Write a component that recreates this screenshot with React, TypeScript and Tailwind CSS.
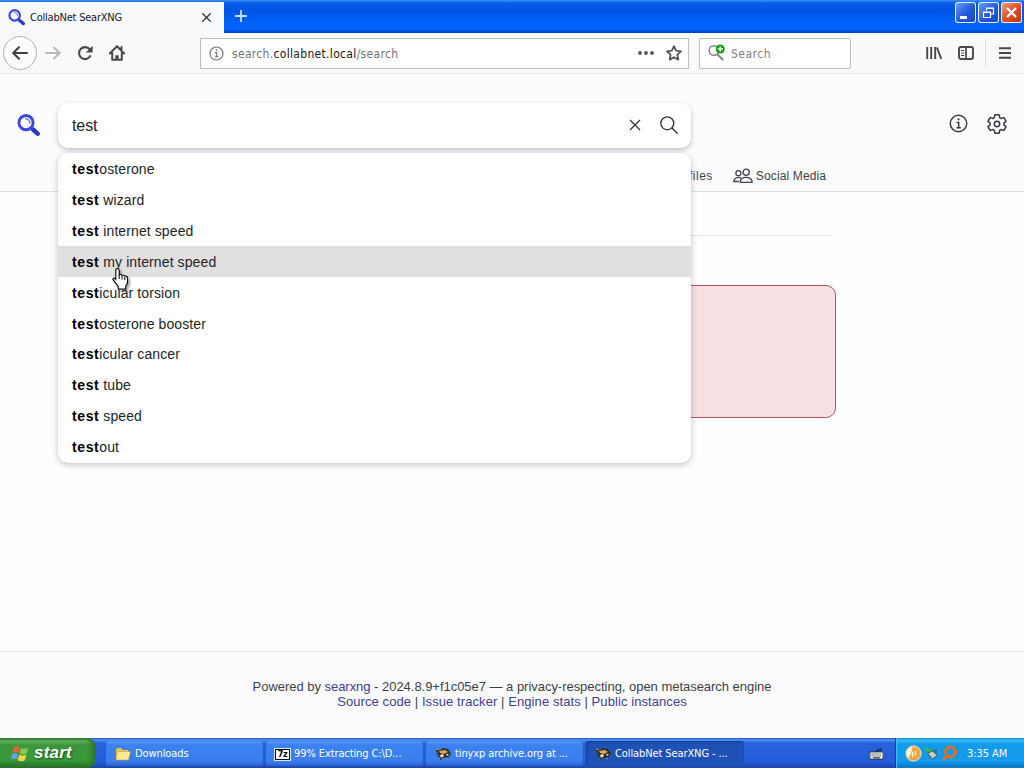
import type { ReactNode } from "react"
import { Plus, X } from "lucide-react"

const suggestions = [
  ["test", "osterone"],
  ["test", " wizard"],
  ["test", " internet speed"],
  ["test", " my internet speed"],
  ["test", "icular torsion"],
  ["test", "osterone booster"],
  ["test", "icular cancer"],
  ["test", " tube"],
  ["test", " speed"],
  ["test", "out"],
]

function SearxLogo({ className }: { className?: string }) {
  return (
    <svg viewBox="0 0 24 24" className={className} fill="none">
      <circle cx="9.4" cy="9" r="7.4" stroke="#3c46e0" strokeWidth="3" />
      <path d="M9 5a4.4 4.4 0 0 1 4.4 4.6" stroke="#7480e8" strokeWidth="1.5" strokeLinecap="round" />
      <path d="M14.5 14.5l2.5 2.5" stroke="#3c46e0" strokeWidth="2.8" />
      <path d="M17 16.5l4.5 4" stroke="#3038c8" strokeWidth="4.8" strokeLinecap="round" />
    </svg>
  )
}

function InfoIcon({ className }: { className?: string }) {
  return (
    <svg viewBox="0 0 18 18" className={className} fill="none" stroke="currentColor">
      <circle cx="9" cy="9" r="7.8" strokeWidth="1.4" />
      <path d="M7.2 8h2v5M7 13h4.2" strokeWidth="1.4" />
      <path d="M8.2 4.2h1.8v1.8H8.2z" fill="currentColor" stroke="none" />
    </svg>
  )
}

function GearIcon() {
  return (
    <svg viewBox="0 0 512 512" className="size-[22px]" fill="none" stroke="#3a3a40" strokeWidth="36" strokeLinejoin="round" strokeLinecap="round">
      <circle cx="256" cy="256" r="62" />
      <path d="M416.39 256a154.34 154.34 0 01-1.53 20.79l45.21 35.46a10.81 10.81 0 012.45 13.75l-42.77 74a10.81 10.81 0 01-13.14 4.59l-44.9-18.08a16.11 16.11 0 00-15.17 1.75A164.48 164.48 0 01325 400.8a15.94 15.94 0 00-8.82 12.14l-6.73 47.89a11.08 11.08 0 01-10.68 9.17h-85.54a11.11 11.11 0 01-10.69-8.87l-6.72-47.82a16.07 16.07 0 00-9-12.22 155.3 155.3 0 01-21.46-12.57 16 16 0 00-15.11-1.71l-44.89 18.07a10.81 10.81 0 01-13.14-4.58l-42.77-74a10.8 10.8 0 012.45-13.75l38.21-30a16.05 16.05 0 006-14.08c-.36-4.17-.58-8.33-.58-12.5s.21-8.27.58-12.35a16 16 0 00-6.07-13.94l-38.19-30A10.81 10.81 0 0149.48 186l42.77-74a10.81 10.81 0 0113.14-4.59l44.9 18.08a16.11 16.11 0 0015.17-1.75A164.48 164.48 0 01187 111.2a15.94 15.94 0 008.82-12.14l6.73-47.89A11.08 11.08 0 01213.23 42h85.54a11.11 11.11 0 0110.69 8.87l6.72 47.82a16.07 16.07 0 009 12.22 155.3 155.3 0 0121.46 12.57 16 16 0 0015.11 1.71l44.89-18.07a10.81 10.81 0 0113.14 4.58l42.77 74a10.8 10.8 0 01-2.45 13.75l-38.21 30a16.05 16.05 0 00-6.05 14.08c.33 4.14.55 8.3.55 12.47z" />
    </svg>
  )
}

function PeopleIcon() {
  return (
    <svg viewBox="0 0 20 16" className="h-4 w-5" fill="none" stroke="#3f3f46" strokeWidth="1.3" strokeLinejoin="round">
      <circle cx="13.2" cy="4.2" r="3.1" />
      <path d="M7.2 14.3c.2-3.5 2.7-4.9 6-4.9s5.8 1.4 6 4.9z" />
      <circle cx="5.4" cy="5.2" r="2.5" />
      <path d="M8.2 9.9c-3.9-1.2-7.1.2-7.4 3.6h5" />
    </svg>
  )
}

function TitleBar() {
  return (
    <div className="flex h-[33px] bg-[linear-gradient(to_bottom,#3a94ff_0px,#0a5ce8_3px,#0054e3_10px,#0062fb_23px,#0066ff_29px,#003fbd_33px)]">
      <div className="mt-0.5 flex h-[31px] w-[224px] items-center bg-[#f8f9fb] pr-[10px] pl-2">
        <SearxLogo className="size-[17px]" />
        <span className="ml-[5px] flex-1 pt-px text-[11px] tracking-[-0.22px] whitespace-nowrap text-[#18181b]">CollabNet SearXNG</span>
        <X className="mb-px size-[15px] text-[#3c3c3f]" strokeWidth={2.3} />
      </div>
      <Plus className="mt-[7px] ml-2 size-[18px] text-[#c5e2ff]" strokeWidth={2.4} />
      <div className="mt-0.5 mr-0.5 ml-auto flex gap-0.5">
        <WindowButton className="bg-[linear-gradient(135deg,#6a9af5,#2458dd_55%,#1948c0)]">
          <path d="M4 13h7v3H4z" fill="#fff" />
        </WindowButton>
        <WindowButton className="bg-[linear-gradient(135deg,#6a9af5,#2458dd_55%,#1948c0)]">
          <path d="M7.5 7.5V5h7v6h-2.5M7.5 5.5h7M4.5 9h7v5.5h-7zM4.5 9.5h7" stroke="#fff" strokeWidth="1.2" fill="none" />
        </WindowButton>
        <WindowButton className="bg-[linear-gradient(135deg,#f09a78,#e0502a_50%,#be340d)]">
          <path d="M5 5l9 9m0-9l-9 9" stroke="#fff" strokeWidth="2.3" />
        </WindowButton>
      </div>
    </div>
  )
}

function WindowButton({ className, children }: { className: string; children: ReactNode }) {
  return (
    <div className={`size-[21px] rounded-[3px] border border-white/90 ${className}`}>
      <svg viewBox="0 0 19 19" className="size-[19px]">
        {children}
      </svg>
    </div>
  )
}

function Toolbar() {
  return (
    <div className="flex h-[41px] items-center border-b border-[#e8e8ea] bg-[#f9f9fa] pl-[3px] text-[12px] text-[#737373]">
      <div className="flex size-[34px] items-center justify-center rounded-full border border-[#b3b3b6] bg-[#fcfcfd]">
        <svg viewBox="0 0 16 16" className="size-4" fill="none" stroke="#3e3e42" strokeWidth="2" strokeLinecap="round" strokeLinejoin="round">
          <path d="M15 8H1.5M7 2.2L1.2 8 7 13.8" />
        </svg>
      </div>
      <svg viewBox="0 0 16 16" className="ml-2 size-4" fill="none" stroke="#b9b9bc" strokeWidth="1.8" strokeLinecap="round" strokeLinejoin="round">
        <path d="M1 8h13.5M9 2.5L14.8 8 9 13.5" />
      </svg>
      <svg viewBox="0 0 16 16" className="ml-4 size-4" fill="none" stroke="#48484c" strokeWidth="2.1">
        <path d="M13.6 10.4A6 6 0 1 1 12.8 4.4" />
        <path d="M15.6.8v6.8H8.8z" fill="#48484c" stroke="none" />
      </svg>
      <svg viewBox="0 0 16 16" className="ml-4 size-4" fill="none" stroke="#48484c" strokeWidth="2" strokeLinejoin="round">
        <path d="M.8 8.5L8 1.3l7.2 7.2M3.2 8v6.8h9.6V8M12.5 2v3" strokeLinecap="round" />
        <path d="M6.3 15v-4.7h3.4V15z" fill="#48484c" stroke="none" />
      </svg>

      <div className="ml-[75px] flex h-[31px] w-[489px] items-center border border-[#bcbcc0] bg-white pr-[6px] pl-2">
        <InfoIcon className="size-[15px] text-[#737376]" />
        <span className="ml-2 flex-1 pt-px tracking-[0.32px]">
          search.<span className="text-[#18181b]">collabnet.local</span>/search
        </span>
        <svg viewBox="0 0 16 4" className="mr-3 h-1 w-4" fill="#55555a">
          <circle cx="2" cy="2" r="1.9" />
          <circle cx="8" cy="2" r="1.9" />
          <circle cx="14" cy="2" r="1.9" />
        </svg>
        <svg viewBox="0 0 16 16" className="size-4" fill="none" stroke="#55555a" strokeWidth="1.8" strokeLinejoin="round">
          <path d="M8 1.2l2.1 4.5 4.9.6-3.6 3.4.9 4.9L8 12.2l-4.3 2.4.9-4.9L1 6.3l4.9-.6z" />
        </svg>
      </div>

      <div className="ml-2.5 flex h-[31px] w-[152px] items-center rounded-xs border border-[#bcbcc0] bg-white pl-2">
        <svg viewBox="0 0 18 18" className="size-[18px]" fill="none">
          <path d="M9.5 10.5l5.2 5" stroke="#858588" strokeWidth="2" strokeLinecap="round" />
          <circle cx="6" cy="6.5" r="4.8" stroke="#858588" strokeWidth="1.5" />
          <circle cx="12.3" cy="5" r="4.5" fill="#12a012" />
          <path d="M12.3 2.4v5.2M9.7 5h5.2" stroke="#fff" strokeWidth="1.5" />
        </svg>
        <span className="ml-[5px] pt-px tracking-[0.5px] text-[#818185]">Search</span>
      </div>

      <svg viewBox="0 0 16 16" className="ml-[75px] size-4" fill="none" stroke="#48484c" strokeWidth="1.9">
        <path d="M1.2 2v12M5.2 2v12M9.2 2v12M11 2.5l4.3 11.5" />
      </svg>
      <svg viewBox="0 0 16 16" className="ml-4 size-4" fill="none" stroke="#48484c">
        <rect x="1" y="2" width="14" height="12" rx="2" strokeWidth="1.9" />
        <path d="M8 2v12" strokeWidth="1.7" />
        <path d="M3 5.5h3.2M3 8h3.2M3 10.5h3.2" strokeWidth="1.1" />
      </svg>
      <div className="ml-[11px] h-7 w-px bg-[#dededf]" />
      <svg viewBox="0 0 14 12" className="ml-3 h-3 w-3.5" stroke="#48484c" strokeWidth="2">
        <path d="M1 1.2h12M1 6h12M1 10.8h12" />
      </svg>
    </div>
  )
}

// Autocomplete list, floats above the page
function Suggestions() {
  return (
    <ul className="absolute top-[50px] left-0 z-10 flex h-[310px] w-full flex-col overflow-hidden rounded-[10px] bg-white text-[14px] text-[#222428] shadow-[0_2px_6px_rgba(34,38,46,0.28)]">
      {suggestions.map(([match, rest], i) => (
        <li
          key={rest}
          className={`flex h-[30.9px] shrink-0 items-center pt-[2.4px] pl-3.5 tracking-[0.1px] whitespace-pre ${i === 3 ? "bg-[#e0e0e0]" : ""}`}
        >
          <b className="tracking-[0.6px] text-black">{match}</b>
          {rest}
        </li>
      ))}
    </ul>
  )
}

function Cursor() {
  return (
    <svg viewBox="0 0 17 23" className="absolute top-[267px] left-[112px] z-20 h-[23px] w-[17px] drop-shadow-[2px_2px_1px_rgba(0,0,0,0.35)]">
      <path
        d="M5.5 1.5c1 0 1.7.7 1.7 1.7v5c0-1 2.8-1 2.8.6 0-1 2.8-.7 2.8.8 0-1 2.7-.6 2.7 1.1v5.1l-1.8 3.5V22H6.2v-2.5L1 12.7c-.6-1.6 1-2.3 2.8-.3V3.2c0-1 .7-1.7 1.7-1.7z"
        fill="#fff"
        stroke="#000"
        strokeWidth="1.1"
      />
      <path d="M7.2 8v4M10 9v3.5M12.8 10v3" stroke="#000" strokeWidth="1" />
    </svg>
  )
}

function SearchPage() {
  return (
    <div className="flex flex-1 flex-col bg-[#fefefe] font-['Liberation_Sans',Arial,sans-serif] text-[#3e3f48]">
      <header className="h-[118px] border-b border-[#dddee4] bg-[#fcfcff] pt-[29px] pl-[17px]">
        <div className="flex h-[45px] items-center">
          <SearxLogo className="size-[23px]" />
          <div className="relative ml-[18px] flex h-[45px] w-[633px] items-center rounded-[10px] bg-white pr-[13px] pl-3.5 shadow-[0_2px_5px_rgba(34,38,46,0.28)]">
            <span className="flex-1 text-[16px] tracking-[-0.1px] text-[#222428]">test</span>
            <svg viewBox="0 0 12 12" className="mr-[19px] mb-0.5 size-3" stroke="#303136" strokeWidth="1.3">
              <path d="M1 1l10 10M11 1L1 11" />
            </svg>
            <svg viewBox="0 0 18 18" className="mb-0.5 size-[18px]" fill="none" stroke="#303136" strokeWidth="1.3" strokeLinecap="round">
              <circle cx="7.3" cy="7.3" r="6.5" />
              <path d="M12 12l5.2 5.2" />
            </svg>
            <Suggestions />
          </div>
          <InfoIcon className="mr-[18px] mb-1 ml-auto size-[19px] text-[#3a3a40]" />
          <div className="mr-4 mb-1">
            <GearIcon />
          </div>
        </div>
        <div className="mt-4 flex items-center text-[12px] leading-6 tracking-[0.13px]">
          <span className="ml-[672px] tracking-[0.5px]">files</span>
          <span className="ml-5">
            <PeopleIcon />
          </span>
          <span className="ml-[3px]">Social Media</span>
        </div>
      </header>

      <main className="flex-1 pl-[58px]">
        <div className="h-11 w-[774px] border-b border-[#e4e4e6]" />
        <div className="mt-[49px] h-[133px] w-[778px] rounded-[10px] border border-[#b3535c] bg-[#f7e1e2]" />
      </main>

      <footer className="h-[87px] border-t border-[#e3e3e8] bg-[#fcfcff] pt-[27px] text-center text-[13px] leading-[15px]">
        <p className="tracking-[-0.03px]">
          Powered by <a className="text-[#3c4196]">searxng</a> - 2024.8.9+f1c05e7 — a privacy-respecting, open metasearch engine
        </p>
        <p className="tracking-[0.08px]">
          <a className="text-[#3c4196]">Source code</a> | <a className="text-[#3c4196]">Issue tracker</a> |{" "}
          <a className="text-[#3c4196]">Engine stats</a> | <a className="text-[#3c4196]">Public instances</a>
        </p>
      </footer>
    </div>
  )
}

function FolderIcon() {
  return (
    <svg viewBox="0 0 16 14" className="h-3.5 w-4 shrink-0">
      <path d="M1 12V2.5L2.5 1H6l1.5 2H13v9z" fill="#f0c54b" />
      <path d="M1 13L2.5 4.5H15.5L13.5 13z" fill="#ffe994" stroke="#c79c31" strokeWidth=".6" />
    </svg>
  )
}

function SevenZipIcon() {
  return (
    <span className="flex h-[11px] w-[15px] shrink-0 items-center justify-center border border-black bg-white text-[9px] leading-none font-bold tracking-[-0.3px] text-black outline outline-white/80">
      7z
    </span>
  )
}

function BrowserIcon() {
  return (
    <svg viewBox="0 0 16 16" className="size-4 shrink-0">
      <path d="M0 4l5 0 3-2 5 1 2 3 1 2-2 2-1 3-2-2-3 1-3 2 0-3-3 0 2-2-3-1 2-1z" fill="#332c26" />
      <path d="M4 5l6-1 3 2-4 2-4-1z" fill="#d8a765" />
      <path d="M5 9l3-1 1 2-3 2zM11 8l3 0-2 2z" fill="#eee2c9" />
      <path d="M1 3l3 1M12 12l1 1" stroke="#c98a42" strokeWidth="1.3" />
    </svg>
  )
}

function TaskButton({ icon, label, active }: { icon: ReactNode; label: string; active?: boolean }) {
  return (
    <div
      className={`mr-0.5 flex h-[25px] w-[158px] items-center gap-1 rounded-[3px] pt-0.5 pl-[9px] whitespace-nowrap ${
        active
          ? "bg-[#1e52b7] shadow-[inset_1px_1px_2px_#123c8d]"
          : "bg-[linear-gradient(to_bottom,#5a9bfb_0,#3c81f0_4px,#3a7eed_20px,#2b65d2_25px)] shadow-[inset_-1px_0_1px_#2858bd]"
      }`}
    >
      {icon}
      <span>{label}</span>
    </div>
  )
}

function Taskbar() {
  return (
    <div className="flex h-[30px] items-center bg-[linear-gradient(to_bottom,#2456c9_0,#4c91f4_2px,#2961dc_5px,#255bdb_24px,#1b45ab_30px)] text-[11px] tracking-[-0.1px] text-white">
      <div className="mr-[10px] flex h-[30px] w-24 items-center rounded-r-[9px] bg-[linear-gradient(to_bottom,#2f782f_0,#69b567_3px,#3c963c_7px,#389a38_22px,#276c27_30px)] pl-[11px] shadow-[inset_-4px_0_5px_#2b752b]">
        <svg viewBox="0 0 18 18" className="size-[19px]">
          <path d="M2.6 3.2q3-1.6 5.7 0L7 8.3q-2.7-1.5-5.7 0z" fill="#ed6237" />
          <path d="M9.4 3.7q3 1.5 6.8 0l-1.5 5.4q-3 1.4-6.6-.2z" fill="#8acb4c" />
          <path d="M1 9.6q3-1.5 5.7 0l-1.3 5.1q-2.8-1.5-5.6 0z" fill="#6b9df4" />
          <path d="M7.8 10.2q3 1.5 6.7 0L13 15.6q-3 1.4-6.6-.2z" fill="#f9d449" />
        </svg>
        <span className="ml-1 font-['Liberation_Sans',Arial,sans-serif] text-[17px] font-bold tracking-[0.2px] italic [text-shadow:1px_1px_2px_#1d4d1d]">start</span>
      </div>
      <TaskButton icon={<FolderIcon />} label="Downloads" />
      <TaskButton icon={<SevenZipIcon />} label="99% Extracting C:\D..." />
      <TaskButton icon={<BrowserIcon />} label="tinyxp archive.org at ..." />
      <TaskButton icon={<BrowserIcon />} label="CollabNet SearXNG - ..." active />
      <svg viewBox="0 0 13 12" className="mt-0.5 ml-auto h-3 w-[13px]">
        <path d="M7 4V2h4V0" stroke="#111" fill="none" />
        <path d="M0 4h13v7H0z" fill="#fff" stroke="#111" strokeWidth=".7" />
        <path d="M1.5 6h10M1.5 8h10" stroke="#222" strokeWidth="1.1" strokeDasharray="1.2 .8" />
        <path d="M3 9.8h7" stroke="#222" />
      </svg>
      <div className="ml-3 flex h-[30px] w-[129px] items-center border-l border-[#123f9c] bg-[linear-gradient(to_bottom,#1478ce_0,#36c2f8_2px,#129bea_6px,#149bec_23px,#0d72be_30px)] pl-[9px] shadow-[inset_1px_0_1px_#48c3fb]">
        <svg viewBox="0 0 18 18" className="size-[17px]">
          <circle cx="9" cy="9" r="8" fill="#f4a339" stroke="#fff0ce" />
          <path d="M8 2a7 7 0 0 0-4 12l3-7z" fill="#fff7e5" />
          <path d="M8 7v6M11 6v5" stroke="#fff3d7" strokeWidth="1.5" />
        </svg>
        <svg viewBox="0 0 16 16" className="ml-0.5 size-[15px]">
          <path d="M1 1l6 2 2 6-6-2z" fill="#35b448" />
          <path d="M4 8l5-3 5 5-5 4z" fill="#c5cec7" stroke="#424b48" />
          <path d="M9 6l4-2v4" stroke="#454e46" fill="none" />
        </svg>
        <svg viewBox="0 0 17 17" className="ml-0.5 size-[17px]" fill="none" stroke="#dd6f20">
          <circle cx="9.5" cy="7" r="5" strokeWidth="2.8" />
          <path d="M6 11l-4 4" strokeWidth="3" />
        </svg>
        <span className="ml-[9px] pt-0.5 tracking-[-0.05px] whitespace-nowrap">3:35 AM</span>
      </div>
    </div>
  )
}

export default function App() {
  return (
    <div className="relative flex h-[768px] w-[1024px] flex-col overflow-hidden font-['DejaVu_Sans_Condensed','DejaVu_Sans',sans-serif]">
      <TitleBar />
      <Toolbar />
      <SearchPage />
      <Taskbar />
      <Cursor />
    </div>
  )
}
